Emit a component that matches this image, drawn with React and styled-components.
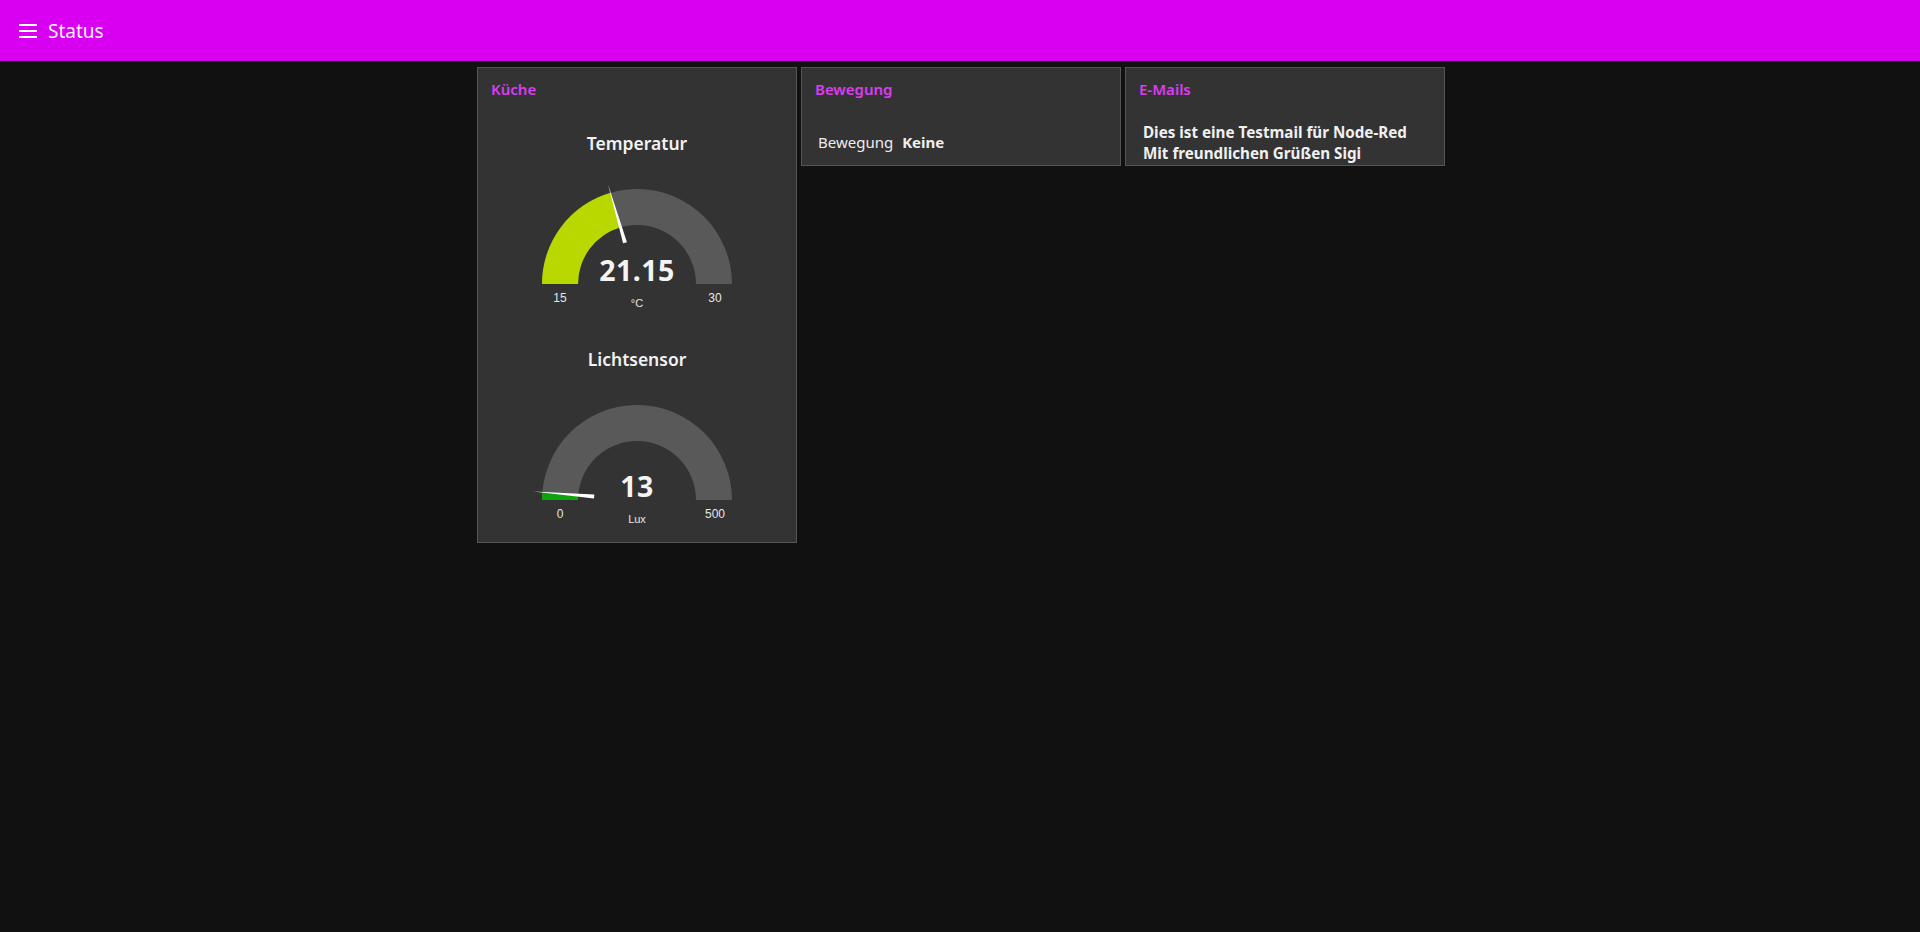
import React from 'react';
import styled, { createGlobalStyle } from 'styled-components';

const GlobalStyle = createGlobalStyle`
  html, body {
    margin: 0;
    padding: 0;
    background-color: #111111;
    font-family: "Noto Sans", "Open Sans", sans-serif;
    color: #eeeeee;
  }
`;

const Page = styled.div`
  min-height: 932px;
  background-color: #111111;
`;

const Toolbar = styled.header`
  height: 61px;
  background-color: #d900f2;
  display: flex;
  align-items: center;
  gap: 11px;
  padding-left: 19px;
  h1 {
    margin: 0;
    font-size: 19px;
    font-weight: 400;
    color: #fdf0ff;
  }
`;

const Board = styled.main`
  display: flex;
  justify-content: center;
  align-items: flex-start;
  gap: 4px;
  padding: 6px 0 0 2px;
`;

const Group = styled.section`
  width: 320px;
  box-sizing: border-box;
  border: 1px solid #555555;
  background-color: #333333;
  overflow: hidden;
  padding-bottom: ${(p) => p.$bottom || 6}px;
`;

const GroupTitle = styled.h2`
  margin: 0;
  height: 43px;
  box-sizing: border-box;
  padding: 11px 0 0 13px;
  font-size: 15px;
  line-height: 20px;
  font-weight: 600;
  color: #dc3cf2;
`;

const Widgets = styled.div`
  display: flex;
  flex-direction: column;
  gap: 6px;
  padding: 0 6px;
`;

const GaugeBox = styled.div`
  height: 210px;
  display: flex;
  flex-direction: column;
  align-items: center;
`;

const GaugeTitle = styled.div`
  height: 50px;
  box-sizing: border-box;
  padding-top: 20px;
  font-size: 17.5px;
  line-height: 24px;
  font-weight: 600;
  color: #f2f2f2;
`;

const TextRow = styled.div`
  height: 48px;
  box-sizing: border-box;
  padding: 21px 0 0 10px;
  display: flex;
  gap: 9px;
  font-size: 15px;
  line-height: 20px;
  color: #eeeeee;
  b {
    font-weight: 700;
  }
`;

const MailText = styled.div`
  height: 48px;
  box-sizing: border-box;
  padding: 11px 0 0 11px;
  font-size: 15.2px;
  line-height: 21px;
  font-weight: 700;
  color: #f0f0f0;
`;

const MenuIcon = () => (
  <svg width="18" height="14" viewBox="0 0 18 14">
    <rect x="0" y="0" width="18" height="2" fill="#fff" />
    <rect x="0" y="6" width="18" height="2" fill="#fff" />
    <rect x="0" y="12" width="18" height="2" fill="#fff" />
  </svg>
);

const W = 306;
const CX = 153;
const CY = 123;
const RO = 95;
const RI = 59;

const polar = (rad, f) => {
  const a = Math.PI * (1 - f);
  return [CX + rad * Math.cos(a), CY - rad * Math.sin(a)];
};

const band = (f) => {
  const [x1, y1] = polar(RO, f);
  const [x2, y2] = polar(RI, f);
  return `M ${CX - RO} ${CY} A ${RO} ${RO} 0 0 1 ${x1} ${y1} L ${x2} ${y2} A ${RI} ${RI} 0 0 0 ${CX - RI} ${CY} Z`;
};

const needle = (f) => {
  const a = Math.PI * (1 - f);
  const [tx, ty] = polar(104, f);
  const [bx, by] = polar(43, f);
  const px = Math.sin(a) * 2;
  const py = Math.cos(a) * 2;
  return `${tx},${ty} ${bx + px},${by + py} ${bx - px},${by - py}`;
};

const Gauge = ({ title, value, unit, min, max, color }) => {
  const f = Math.min(1, Math.max(0, (value - min) / (max - min)));
  return (
    <GaugeBox>
      <GaugeTitle>{title}</GaugeTitle>
      <svg width={W} height="160" viewBox={`0 0 ${W} 160`}>
        <path d={band(1)} fill="#595959" />
        <path d={band(f)} fill={color} />
        <polygon points={needle(f)} fill="#ffffff" />
        <text
          x={CX}
          y="120"
          textAnchor="middle"
          fontFamily='"Noto Sans", sans-serif'
          fontWeight="700"
          fontSize="28.5"
          letterSpacing="0.5"
          fill="#f4f4f4"
        >
          {value}
        </text>
        <g fontFamily='"Liberation Sans", Arial, sans-serif' fill="#e6e6e6" textAnchor="middle">
          <text x={CX - 77} y="141" fontSize="12">{min}</text>
          <text x={CX + 78} y="141" fontSize="12">{max}</text>
          <text x={CX} y="146" fontSize="11">{unit}</text>
        </g>
      </svg>
    </GaugeBox>
  );
};

export default function App() {
  return (
    <Page>
      <GlobalStyle />
      <Toolbar>
        <MenuIcon />
        <h1>Status</h1>
      </Toolbar>
      <Board>
        <Group $bottom={5}>
          <GroupTitle>Küche</GroupTitle>
          <Widgets>
            <Gauge title="Temperatur" value={21.15} unit="°C" min={15} max={30} color="#b8d800" />
            <Gauge title="Lichtsensor" value={13} unit="Lux" min={0} max={500} color="#0ca30c" />
          </Widgets>
        </Group>
        <Group>
          <GroupTitle>Bewegung</GroupTitle>
          <Widgets>
            <TextRow>
              <span>Bewegung</span>
              <b>Keine</b>
            </TextRow>
          </Widgets>
        </Group>
        <Group>
          <GroupTitle>E-Mails</GroupTitle>
          <Widgets>
            <MailText>
              Dies ist eine Testmail für Node-Red
              <br />
              Mit freundlichen Grüßen Sigi
            </MailText>
          </Widgets>
        </Group>
      </Board>
    </Page>
  );
}
